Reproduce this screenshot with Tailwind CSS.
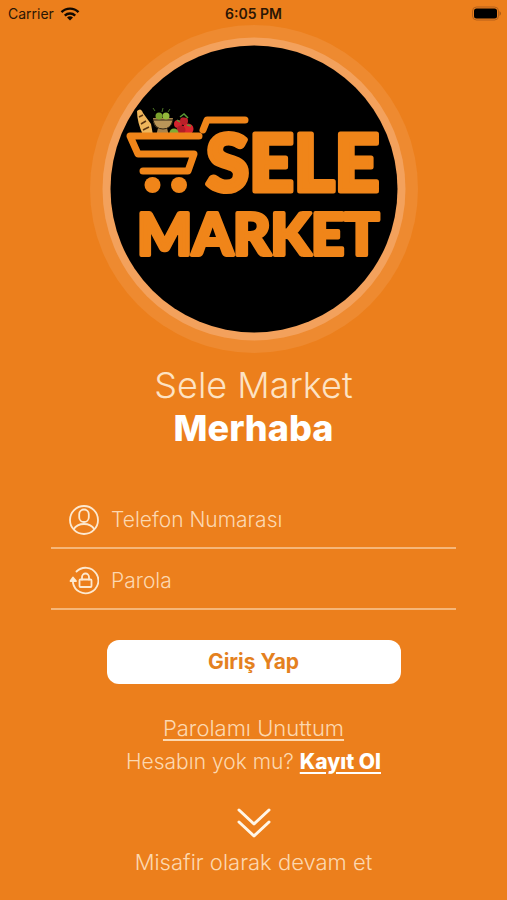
<!DOCTYPE html>
<html lang="tr">
<head>
<meta charset="utf-8">
<meta name="viewport" content="width=device-width, initial-scale=1">
<title>Sele Market</title>
<script src="https://cdn.jsdelivr.net/npm/@tailwindcss/browser@4"></script>
</head>
<body class="flex min-h-screen flex-col bg-[#ec7f1c] font-['Inter',sans-serif] text-[#fde3c4]">
<header class="grid h-7 grid-cols-3 items-center px-2 text-sm text-[#2b1604]">
  <div class="flex items-center gap-1.5">
    <span>Carrier</span>
    <svg class="h-3.5 w-5" viewBox="0 0 20 14" fill="none" stroke="#120900" stroke-width="2.4" aria-label="Wi-Fi"><path d="M1.5 5.2a12 12 0 0 1 17 0M4.8 8.6a7.4 7.4 0 0 1 10.4 0"/><path d="M10 13.5 7 10.6a4.3 4.3 0 0 1 6 0Z" fill="#120900" stroke="none"/></svg>
  </div>
  <div class="text-center font-semibold">6:05 PM</div>
  <div class="-mr-1 flex justify-end">
    <svg class="h-4 w-8" viewBox="0 0 32 16" aria-label="Pil"><rect x="1.5" y="1" width="26" height="13" rx="4" fill="none" stroke="#b5611a"/><rect x="3" y="2.500" width="23" height="10" rx="2.5" fill="#000"/><path d="M28.500 5q3 2.500 0 5Z" fill="#a95a17"/></svg>
  </div>
</header>
<main class="flex flex-col items-center px-[51px]">
  <svg class="-mt-1 size-[330px]" viewBox="0 0 330 330" role="img" aria-label="Sele Market logosu">
    <circle cx="165" cy="165" r="164" fill="#ee8a30"/>
    <circle cx="165" cy="165" r="151.500" fill="#f3a15c"/>
    <circle cx="165" cy="165" r="143.500" fill="#000"/>
    <g>
      <path d="M48 87q4-4 6 2l8 11 2 11h-10q-6-13-6-24Z" fill="#efb65c"/>
      <path d="m50 93 4-2m-2 9 5-3m-3 9 6-3" stroke="#5d3511" stroke-width="1.500"/>
      <path d="M64 94h20q-1 8-6 10l2 8H67l2-8q-5-2-5-10Z" fill="#a9834a"/>
      <path d="M64 96h20q-2 9-10 9t-10-9Z" fill="#b99558" stroke="#2e2413"/>
      <circle cx="70" cy="92" r="3.500" fill="#7ba12c"/><circle cx="77" cy="92" r="3.500" fill="#94b83b"/><path d="m66 87-2-3m9 4 1-4m5 4 2-3" stroke="#4d7625"/>
      <circle cx="89" cy="100" r="4" fill="#d3242d"/><circle cx="95" cy="97" r="4" fill="#bb2029"/><circle cx="99" cy="105" r="5.500" fill="#d9262e"/><circle cx="92" cy="106" r="4.500" fill="#b51d27"/>
      <circle cx="85" cy="109" r="4.500" fill="#7dac35"/><path d="m91 93 4-3 4 4m-1 7 4 1m-14-6 3 2" stroke="#5b9a35" stroke-width="1.500"/>
    </g>
    <g fill="none" stroke="#f08519" stroke-width="7" stroke-linecap="round" stroke-linejoin="round">
      <path d="M110 112H41l8 18h56l-6 17H54"/>
      <path d="m114 106 4-10h38"/>
    </g>
    <circle cx="63.500" cy="161" r="8" fill="#f08519"/><circle cx="90" cy="161" r="8" fill="#f08519"/>
    <g class="font-['Lato',sans-serif] font-black" fill="#f08519" stroke="#f08519" stroke-linejoin="round">
      <text x="117" y="167" font-size="78" stroke-width="5">SELE</text>
      <text x="48" y="231" font-size="58" stroke-width="4">MARKET</text>
    </g>
  </svg>
  <h1 class="mt-2.5 flex flex-col text-center text-4xl leading-[43px] font-light">Sele Market<span class="font-extrabold text-white">Merhaba</span></h1>
  <form class="mt-[38px] flex w-full flex-col items-center" onsubmit="return false">
    <div class="flex h-[61px] w-full items-center gap-3 border-b-2 border-[#f6b678] pt-1 pl-[18px]">
      <label for="phone" aria-label="Telefon Numarası"><svg class="size-[30px]" viewBox="0 0 30 30" fill="none" stroke="#fde9d0" stroke-width="1.800"><circle cx="15" cy="15" r="14"/><rect x="10.200" y="4.500" width="9.600" height="12.500" rx="4.800"/><path d="M4.500 24.500c2.500-4 6.200-5.500 10.500-5.500s8 1.500 10.500 5.500"/></svg></label>
      <input id="phone" type="tel" placeholder="Telefon Numarası" class="min-w-0 flex-1 bg-transparent text-[21px] font-light outline-none placeholder:text-[#fcd8b0]">
    </div>
    <div class="flex h-[61px] w-full items-center gap-3 border-b-2 border-[#f6b678] pt-1 pl-[18px]">
      <label for="password" aria-label="Parola"><svg class="size-[30px]" viewBox="0 0 30 30" fill="none" stroke="#fde9d0" stroke-width="1.800" stroke-linecap="round"><path d="M7.500 5.500A12.800 12.800 0 1 1 4 17v-3"/><path d="m1.500 15 2.500-3.500 3 3.500Z" fill="#fde9d0" stroke-linejoin="round"/><rect x="10.500" y="13.500" width="12" height="7.500" rx="1"/><path d="M13 13.500v-2.500a3.500 3.500 0 0 1 7 0v2.500"/></svg></label>
      <input id="password" type="password" placeholder="Parola" class="min-w-0 flex-1 bg-transparent text-[21px] font-light outline-none placeholder:text-[#fcd8b0]">
    </div>
    <button type="submit" class="mt-[30px] h-11 w-[294px] max-w-full rounded-xl bg-white text-[21px] font-bold text-[#e4811f]">Giriş Yap</button>
  </form>
  <nav class="mt-7 flex flex-col items-center text-[22px] leading-[33px] font-light text-[#fcd8b0]">
    <a href="#" class="underline decoration-2 underline-offset-3">Parolamı Unuttum</a>
    <p class="text-[21px]">Hesabın yok mu? <a href="#" class="font-extrabold text-white underline decoration-2 underline-offset-3">Kayıt Ol</a></p>
    <a href="#" class="mt-7 flex flex-col items-center gap-2">
      <svg class="h-8 w-9" viewBox="0 0 36 32" fill="none" stroke="#fff6e8" stroke-width="3" stroke-linecap="round" stroke-linejoin="round" aria-hidden="true"><path d="m3 4 15 14L33 4M3 16l15 14 15-14"/></svg>
      Misafir olarak devam et
    </a>
  </nav>
</main>
</body>
</html>
